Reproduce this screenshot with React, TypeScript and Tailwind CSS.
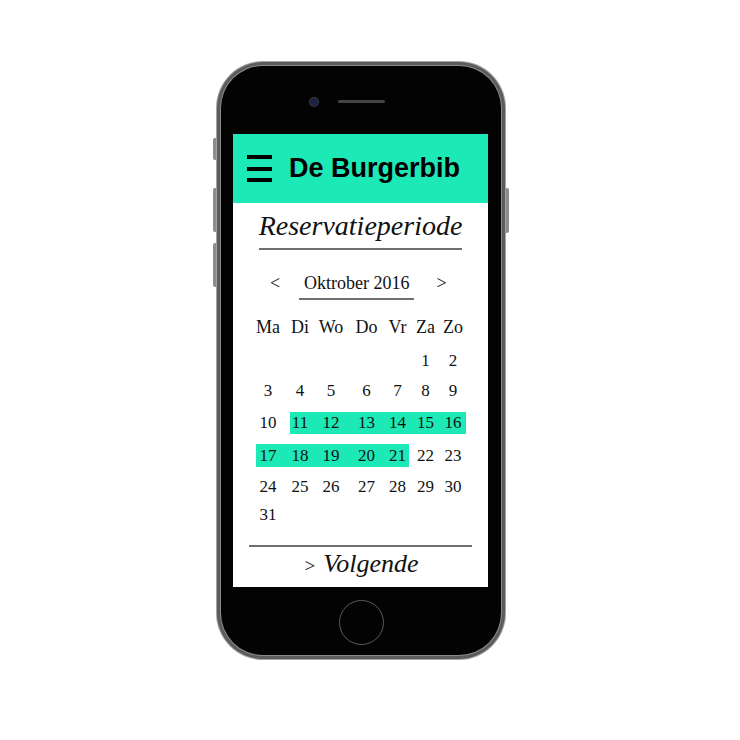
const serif = { fontFamily: '"Liberation Serif", "Times New Roman", serif' };

const cols = [
  "w-[34px] pr-[10px]",
  "w-[28px] pr-[8px]",
  "w-[35px] pr-[9px]",
  "w-[33px] pr-[6px]",
  "w-[23px]",
  "w-[29px] pl-[4px]",
  "w-[28px] pl-[2px]",
];

const heads = ["Ma", "Di", "Wo", "Do", "Vr", "Za", "Zo"];

const rows: { mt: string; h: string; days: (number | null)[] }[] = [
  { mt: "mt-[12px]", h: "h-[22px]", days: [null, null, null, null, null, 1, 2] },
  { mt: "mt-[8px]", h: "h-[22px]", days: [3, 4, 5, 6, 7, 8, 9] },
  { mt: "mt-[10px]", h: "h-[22px]", days: [10, 11, 12, 13, 14, 15, 16] },
  { mt: "mt-[10px]", h: "h-[23px]", days: [17, 18, 19, 20, 21, 22, 23] },
  { mt: "mt-[9px]", h: "h-[22px]", days: [24, 25, 26, 27, 28, 29, 30] },
  { mt: "mt-[6px]", h: "h-[22px]", days: [31, null, null, null, null, null, null] },
];

const picked = (d: number | null) => d !== null && d >= 11 && d <= 21;

function Calendar() {
  return (
    <div className="mt-[16px] pl-[23px] text-[17px] text-[#111]" style={serif}>
      <div className="flex h-[22px] text-[18px] leading-[22px]">
        {heads.map((h, i) => (
          <div key={h} className={`${cols[i]} text-center`}>
            {h}
          </div>
        ))}
      </div>
      {rows.map((r, ri) => (
        <div key={ri} className={`flex ${r.mt} ${r.h} leading-[22px]`}>
          {r.days.map((d, i) => (
            <div
              key={i}
              className={`${cols[i]} flex items-center justify-center ${picked(d) ? "bg-[#1de9b6]" : ""}`}
            >
              {d ?? ""}
            </div>
          ))}
        </div>
      ))}
    </div>
  );
}

function Screen() {
  return (
    <div className="h-[453px] w-[255px] overflow-hidden bg-white">
      <div className="flex h-[69px] items-center bg-[#1de9b6] pl-[14px]">
        <div className="flex w-[25px] flex-col gap-[7.5px]">
          <div className="h-[4px] bg-black" />
          <div className="h-[4px] bg-black" />
          <div className="h-[4px] bg-black" />
        </div>
        <div
          className="ml-[17px] text-[27px] font-bold leading-none text-black"
          style={{ fontFamily: '"Liberation Sans", Arial, sans-serif' }}
        >
          De Burgerbib
        </div>
      </div>

      <div className="flex justify-center">
        <div
          className="mt-[9px] border-b-2 border-[#6f6f6f] pb-[8px] text-[28px] italic leading-[28px] text-[#111]"
          style={serif}
        >
          Reservatieperiode
        </div>
      </div>

      <div className="mt-[21px] flex items-start pl-[37px] text-[18px] leading-[24px] text-[#111]" style={serif}>
        <span className="w-[10px]">&lt;</span>
        <span className="ml-[19px] border-b-2 border-[#6f6f6f] px-[5px] pb-[3px]">Oktrober 2016</span>
        <span className="ml-[22px]">&gt;</span>
      </div>

      <Calendar />

      <div className="mx-[16px] mt-[19px] border-t-2 border-[#6f6f6f]" />
      <div className="mt-[4px] flex items-baseline justify-center pl-[2px] text-[#111]" style={serif}>
        <span className="mr-[8px] text-[19px] leading-[26px]">&gt;</span>
        <span className="text-[26px] italic leading-[26px]">Volgende</span>
      </div>
    </div>
  );
}

function Phone() {
  return (
    <div className="relative h-[599px] w-[290px]">
      <div className="absolute left-[-3px] top-[77px] h-[22px] w-[4px] rounded-l-[2px] bg-[#8b8b90]" />
      <div className="absolute left-[-3px] top-[127px] h-[44px] w-[4px] rounded-l-[2px] bg-[#8b8b90]" />
      <div className="absolute left-[-3px] top-[182px] h-[44px] w-[4px] rounded-l-[2px] bg-[#8b8b90]" />
      <div className="absolute right-[-3px] top-[127px] h-[45px] w-[4px] rounded-r-[2px] bg-[#8b8b90]" />

      <div className="relative h-full w-full rounded-[47px] bg-[#a4a4a6] p-[1px]">
        <div className="h-full w-full rounded-[46px] bg-[#5c5c5e] p-[3px]">
          <div className="h-full w-full rounded-[43px] bg-[#8a8a8c] p-[1px]">
            <div className="flex h-full w-full flex-col rounded-[42px] bg-[#030303]">
              <div className="flex h-[68px] items-start justify-center gap-[20px] pt-[32px]">
                <div className="h-[8px] w-[8px] rounded-full bg-[#1c2340] ring-1 ring-[#3a3a44]" />
                <div className="mt-[2px] h-[3px] w-[47px] rounded-full bg-[#444444]" />
                <div className="w-[8px]" />
              </div>
              <div className="ml-[12px]">
                <Screen />
              </div>
              <div className="flex flex-1 justify-center pt-[13px]">
                <div className="h-[45px] w-[45px] rounded-full border-[1.5px] border-[#5a5a5a]" />
              </div>
            </div>
          </div>
        </div>
      </div>
    </div>
  );
}

export default function App() {
  return (
    <div className="h-[740px] w-[740px] bg-white pl-[216px] pt-[61px]">
      <Phone />
    </div>
  );
}
